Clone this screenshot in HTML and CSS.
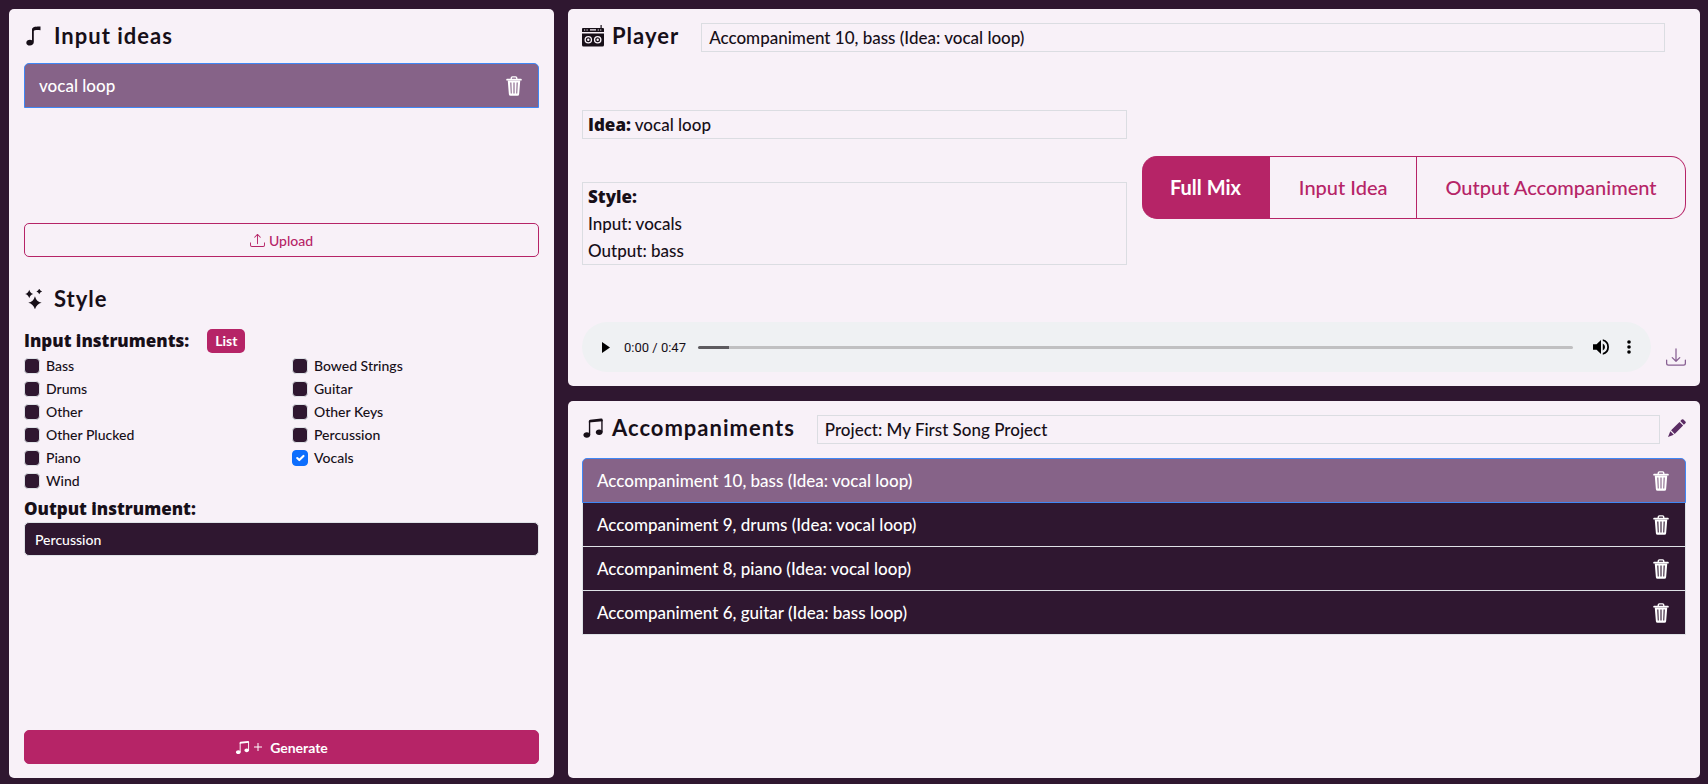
FILE: index.html
```
<!DOCTYPE html>
<html lang="en">
<head>
    <meta charset="UTF-8">
    <meta name="viewport" content="width=device-width, initial-scale=1.0">
    <title>Accompaniments</title>
    <link rel="stylesheet" href="styles.css">
</head>
<body>

<svg class="sprite" aria-hidden="true">
    <symbol id="trash" viewBox="0 0 16 16">
        <path d="M2.5 2.9h11" stroke="currentColor" stroke-width="1.5" stroke-linecap="round"/>
        <path d="M5.8 2.5V1.6q0-.9.9-.9h2.6q.9 0 .9.9v.9" fill="none" stroke="currentColor" stroke-width="1.1"/>
        <path fill="currentColor" fill-rule="evenodd" d="M3 3.500h10l-.9 11q-.1 1.300-1.400 1.300H5.300q-1.300 0-1.400-1.300zM5 5.200l.4 8.800h.8L5.900 5.200zm2.550 0V14h.9V5.200zm2.550 0L9.800 14h.8l.4-8.800z"/>
    </symbol>
    <symbol id="notes" viewBox="0 0 16 16">
        <path fill="currentColor" d="M6 13c0 1.105-1.120 2-2.500 2S1 14.105 1 13s1.120-2 2.500-2 2.500.896 2.500 2m9-2c0 1.105-1.120 2-2.500 2s-2.500-.895-2.500-2 1.120-2 2.500-2 2.500.895 2.500 2"/>
        <path fill="currentColor" fill-rule="evenodd" d="M14 11V2h1v9zM6 3v10H5V3z"/>
        <path fill="currentColor" d="M5 2.905a1 1 0 0 1 .9-.995l8-.800a1 1 0 0 1 1.100.995V3L5 4z"/>
    </symbol>
</svg>

<div class="layout">
    <aside class="panel sidebar">
        <section class="ideas">
            <h2>
                <svg class="icon" viewBox="0 0 20 20"><path fill="currentColor" d="M8 3.500C8.500 1 11 .5 16.500.6v3.600c-3-.4-6.200-.4-6.700.8v11c0 2.200-1.700 3.600-3.900 3.600S2.300 18.500 2.300 16.700s1.700-2.900 3.700-2.900c.8 0 1.500.2 2 .5z"/></svg>
                Input ideas
            </h2>
            <ul class="list">
                <li class="active">vocal loop
                    <button type="button" class="icon-btn" aria-label="Delete vocal loop"><svg class="icon"><use href="#trash"/></svg></button>
                </li>
            </ul>
            <button type="button" class="btn btn-outline">
                <svg class="icon-sm" viewBox="0 0 16 16" fill="currentColor"><path d="M.5 9.900a.5.5 0 0 1 .5.5v2.500a1 1 0 0 0 1 1h12a1 1 0 0 0 1-1v-2.500a.5.5 0 0 1 1 0v2.500a2 2 0 0 1-2 2H2a2 2 0 0 1-2-2v-2.500a.5.5 0 0 1 .5-.5"/><path d="M7.646 1.146a.5.5 0 0 1 .708 0l3 3a.5.5 0 0 1-.708.708L8.500 2.707V11.500a.5.5 0 0 1-1 0V2.707L5.354 4.854a.5.5 0 1 1-.708-.708z"/></svg>
                Upload
            </button>
        </section>

        <section class="style">
            <h2>
                <svg class="icon" viewBox="1 1 18 21" fill="currentColor"><path d="M11 8.500q1.500 5.700 7 7-5.500 1.300-7 7-1.500-5.700-7-7 5.500-1.300 7-7zM5 1.800q.9 3.700 4.300 4.500Q5.900 7.100 5 10.800 4.100 7.100.7 6.300 4.100 5.500 5 1.800zM15.500.5q.7 2.300 3 3-2.300.7-3 3-.7-2.300-3-3 2.300-.7 3-3z"/></svg>
                Style
            </h2>
            <div class="field-head">
                <h3>Input instruments:</h3>
                <button type="button" class="badge">List</button>
            </div>
            <div class="checks">
                <label><input type="checkbox">Bass</label>
                <label><input type="checkbox">Bowed Strings</label>
                <label><input type="checkbox">Drums</label>
                <label><input type="checkbox">Guitar</label>
                <label><input type="checkbox">Other</label>
                <label><input type="checkbox">Other Keys</label>
                <label><input type="checkbox">Other Plucked</label>
                <label><input type="checkbox">Percussion</label>
                <label><input type="checkbox">Piano</label>
                <label><input type="checkbox" checked>Vocals</label>
                <label><input type="checkbox">Wind</label>
            </div>
            <h3><label for="output">Output instrument:</label></h3>
            <select id="output">
                <option>Percussion</option>
                <option>Bass</option>
                <option>Drums</option>
            </select>
        </section>

        <button type="button" class="btn btn-primary">
            <svg class="icon-sm"><use href="#notes"/></svg>
            <svg class="icon-plus" viewBox="0 0 8 8"><path d="M4 0v8M0 4h8" stroke="currentColor" fill="none"/></svg>
            Generate
        </button>
    </aside>

    <main class="content">
        <section class="panel player">
            <div class="title-row">
                <h2>
                    <svg class="icon-lg" viewBox="0 0 22 22"><path fill="currentColor" fill-rule="evenodd" d="M18.500 3V0h1.200v3H21q1 0 1 1v3H0V4q0-1 1-1zM2 4.400v1h1.200v-1zm2.500 0v1h1.200v-1zm3.500-.1v1.200h6V4.300zm7.700.1v1h1.200v-1zm2.400 0v1h1.200v-1zM0 8.500h22V20q0 1.500-1.500 1.500h-19Q0 21.500 0 20zM6.300 11a3.800 3.800 0 1 0 0 7.600 3.800 3.800 0 0 0 0-7.600zm0 1.300a2.500 2.500 0 1 1 0 5 2.500 2.500 0 0 1 0-5zm0 1.300a1.200 1.200 0 1 0 0 2.400 1.200 1.200 0 0 0 0-2.400zM15.700 11a3.800 3.800 0 1 0 0 7.600 3.800 3.800 0 0 0 0-7.600zm0 1.300a2.500 2.500 0 1 1 0 5 2.500 2.500 0 0 1 0-5zm0 1.300a1.200 1.200 0 1 0 0 2.400 1.200 1.200 0 0 0 0-2.400z"/></svg>
                    Player
                </h2>
                <div class="box title-box">Accompaniment 10, bass (Idea: vocal loop)</div>
            </div>

            <div class="details">
                <div class="info">
                    <div class="box"><b>Idea:</b> vocal loop</div>
                    <div class="box"><b>Style:</b><br>Input: vocals<br>Output: bass</div>
                </div>
                <div class="mix">
                    <button type="button" class="selected">Full Mix</button>
                    <button type="button">Input Idea</button>
                    <button type="button">Output Accompaniment</button>
                </div>
            </div>

            <div class="audio-row">
                <div class="audio">
                    <button type="button" class="audio-btn" aria-label="Play"><svg class="icon-play" viewBox="0 0 8 11"><path d="M0 0l8 5.500L0 11z"/></svg></button>
                    <span class="time">0:00 / 0:47</span>
                    <input type="range" class="seek" min="0" max="47" value="0" aria-label="Seek">
                    <button type="button" class="audio-btn" aria-label="Mute"><svg class="icon-volume" viewBox="3 3 18 18"><path d="M3 9v6h4l5 5V4L7 9zm13.500 3A4.500 4.500 0 0 0 14 7.970v8.050A4.500 4.500 0 0 0 16.500 12zM14 3.230v2.060a7 7 0 0 1 0 13.420v2.060a9 9 0 0 0 0-17.540z"/></svg></button>
                    <button type="button" class="audio-btn" aria-label="More options"><svg class="icon-more" viewBox="0 0 4 14"><circle cx="2" cy="2" r="1.800"/><circle cx="2" cy="7" r="1.800"/><circle cx="2" cy="12" r="1.800"/></svg></button>
                </div>
                <button type="button" class="icon-btn download" aria-label="Download">
                    <svg class="icon" viewBox="0 0 16 16" fill="currentColor"><path d="M.5 9.900a.5.5 0 0 1 .5.5v2.500a1 1 0 0 0 1 1h12a1 1 0 0 0 1-1v-2.500a.5.5 0 0 1 1 0v2.500a2 2 0 0 1-2 2H2a2 2 0 0 1-2-2v-2.500a.5.5 0 0 1 .5-.5"/><path d="M7.646 11.854a.5.5 0 0 0 .708 0l3-3a.5.5 0 0 0-.708-.708L8.500 10.293V1.500a.5.5 0 0 0-1 0v8.793L5.354 8.146a.5.5 0 1 0-.708.708z"/></svg>
                </button>
            </div>
        </section>

        <section class="panel accompaniments">
            <div class="title-row">
                <h2><svg class="icon-lg"><use href="#notes"/></svg>Accompaniments</h2>
                <div class="box title-box">Project: My First Song Project</div>
                <button type="button" class="icon-btn edit" aria-label="Rename project">
                    <svg class="icon-edit" viewBox="0 0 18 18" fill="currentColor"><path d="M13.800.6q.8-.8 1.600 0l2 2q.8.800 0 1.600l-1.500 1.500-3.600-3.600zM11.500 2.900l3.600 3.600-8.400 8.400-3.600-3.600zM2.300 12.200l3.500 3.500L0 18z"/></svg>
                </button>
            </div>
            <ul class="list">
                <li class="active">Accompaniment 10, bass (Idea: vocal loop)
                    <button type="button" class="icon-btn" aria-label="Delete accompaniment 10"><svg class="icon"><use href="#trash"/></svg></button>
                </li>
                <li>Accompaniment 9, drums (Idea: vocal loop)
                    <button type="button" class="icon-btn" aria-label="Delete accompaniment 9"><svg class="icon"><use href="#trash"/></svg></button>
                </li>
                <li>Accompaniment 8, piano (Idea: vocal loop)
                    <button type="button" class="icon-btn" aria-label="Delete accompaniment 8"><svg class="icon"><use href="#trash"/></svg></button>
                </li>
                <li>Accompaniment 6, guitar (Idea: bass loop)
                    <button type="button" class="icon-btn" aria-label="Delete accompaniment 6"><svg class="icon"><use href="#trash"/></svg></button>
                </li>
            </ul>
        </section>
    </main>
</div>

</body>
</html>
```
FILE: styles.css
```
* {
    box-sizing: border-box;
}

body {
    margin: 0;
    font-family: "Gill Sans", Lato, sans-serif;
    font-size: 17px;
    font-weight: 500;
    line-height: 27px;
    color: #170f18;
    background-color: #2f1730;
}

h2, h3, ul {
    margin: 0;
    padding: 0;
}

button, select, input {
    font: inherit;
    margin: 0;
}

button {
    cursor: pointer;
}

svg {
    display: block;
    flex-shrink: 0;
}

.sprite {
    position: absolute;
    width: 0;
    height: 0;
}

.icon {
    width: 20px;
    height: 20px;
}

.icon-sm {
    width: 15px;
    height: 15px;
}

.icon-lg {
    width: 22px;
    height: 22px;
}

.icon-edit {
    width: 18px;
    height: 18px;
}

.layout {
    display: grid;
    grid-template-columns: 13fr 27fr;
    gap: 14px;
    min-height: 100vh;
    padding: 9px 8px 6px 9px;
}

.panel {
    background-color: #f8f1f8;
    border-radius: 5px;
    padding: 14px 15px;
}

/* Headings */
h2 {
    display: flex;
    align-items: center;
    gap: 10px;
    font-size: 22px;
    font-weight: 700;
    line-height: 26px;
    letter-spacing: 1px;
}

h3, .box b {
    font-family: "Gill Sans", "Open Sans", sans-serif;
    font-size: 17px;
    font-weight: 800;
}

/* Left panel */
.sidebar {
    display: flex;
    flex-direction: column;
}

.ideas {
    display: flex;
    flex-direction: column;
    height: 234px;
}

.ideas .list {
    margin-top: 14px;
}

.ideas .btn {
    margin-top: auto;
}

.style {
    padding-top: 29px;
}

.field-head {
    display: flex;
    align-items: center;
    gap: 18px;
    margin-top: 15px;
}

.badge {
    padding: 0 8px;
    color: #fff;
    background-color: #b62467;
    border: none;
    border-radius: 5px;
    font-size: 14px;
    font-weight: 700;
    line-height: 24px;
}

.checks {
    display: grid;
    grid-template-columns: 268px 1fr;
    margin-bottom: 3px;
    font-size: 14px;
}

.checks label {
    display: flex;
    align-items: center;
    gap: 6px;
    height: 23px;
}

.checks input {
    appearance: none;
    width: 16px;
    height: 16px;
    background-color: #2f1730;
    border: 1px solid #dee2e6;
    border-radius: 4px;
}

.checks input:checked {
    border-color: #0d6efd;
    background: #0d6efd url("data:image/svg+xml,%3Csvg xmlns='http://www.w3.org/2000/svg' viewBox='0 0 20 20'%3E%3Cpath fill='none' stroke='%23fff' stroke-linecap='round' stroke-linejoin='round' stroke-width='3' d='m6 10 3 3 6-6'/%3E%3C/svg%3E") center / contain;
}

select {
    appearance: none;
    display: block;
    width: 100%;
    height: 34px;
    padding: 0 10px;
    color: #fff;
    background-color: #2f1730;
    border: 1px solid #dee2e6;
    border-radius: 5px;
    font-size: 14px;
}

.btn {
    display: flex;
    align-items: center;
    justify-content: center;
    gap: 4px;
    width: 100%;
    height: 34px;
    border: 1px solid #b62467;
    border-radius: 5px;
    font-size: 14px;
}

.btn-outline {
    color: #b62467;
    background-color: transparent;
}

.btn-primary {
    margin-top: auto;
    color: #fff;
    background-color: #b62467;
    font-weight: 700;
}

.icon-plus {
    width: 8px;
    height: 8px;
    margin-right: 4px;
}

/* Lists */
.list {
    list-style: none;
}

.list li {
    display: flex;
    align-items: center;
    justify-content: space-between;
    padding: 8px 14px;
    color: #fff;
    background-color: #2f1730;
    border: 1px solid #dee2e6;
    border-top: none;
}

.list .active {
    background-color: #866388;
    border: 1px solid #3f87f5;
    border-radius: 5px 5px 0 0;
}

.icon-btn {
    padding: 0;
    color: inherit;
    background: none;
    border: none;
}

/* Right side */
.content {
    display: grid;
    grid-template-rows: 1fr 1fr;
    gap: 15px;
}

.player, .accompaniments {
    display: flex;
    flex-direction: column;
    padding: 14px;
}

.title-row {
    display: flex;
    align-items: flex-start;
    gap: 8px;
}

.title-row h2 {
    gap: 8px;
}

.box {
    padding: 0 5px;
    border: 1px solid #dbdde2;
}

.title-box {
    flex: 1;
    margin-left: 14px;
    padding: 0 7px;
}

.player .title-box {
    margin-right: 21px;
}

.details {
    display: flex;
    flex: 1;
    align-items: center;
    gap: 15px;
}

.info {
    display: grid;
    flex: 1;
    gap: 43px;
}

.mix {
    display: flex;
    flex: 1;
}

.mix button {
    flex: auto;
    height: 63px;
    padding: 0 20px;
    color: #b62467;
    background-color: transparent;
    border: 1px solid #b62467;
    border-left: none;
    font-size: 20px;
    white-space: nowrap;
}

.mix button:first-child {
    border-radius: 15px 0 0 15px;
}

.mix button:last-child {
    border-radius: 0 15px 15px 0;
}

.mix .selected {
    color: #fff;
    background-color: #b62467;
    font-weight: 700;
}

/* Audio player */
.audio-row {
    display: flex;
    align-items: flex-end;
    gap: 15px;
}

.audio {
    display: flex;
    flex: 1;
    align-items: center;
    height: 50px;
    padding: 0 20px;
    background-color: #eff1f3;
    border-radius: 25px;
}

.audio-btn {
    padding: 0;
    background: none;
    border: none;
}

.icon-play {
    width: 8px;
    height: 11px;
}

.icon-volume {
    width: 16px;
    height: 16px;
}

.icon-more {
    width: 4px;
    height: 14px;
    margin-left: 18px;
}

.time {
    margin-left: 14px;
    font-family: Roboto, sans-serif;
    font-size: 13px;
    font-weight: 400;
}

.seek {
    appearance: none;
    flex: 1;
    height: 3px;
    margin: 0 20px 0 12px;
    border-radius: 2px;
    background: linear-gradient(to right, #5d5b5f 31px, #c0c0c1 31px);
}

.seek::-webkit-slider-thumb {
    appearance: none;
    width: 0;
}

.download {
    margin-bottom: 5px;
    color: #875f92;
}

.edit {
    margin-top: 4px;
    color: #5b2c64;
}

.accompaniments .list {
    margin-top: 14px;
}
```
